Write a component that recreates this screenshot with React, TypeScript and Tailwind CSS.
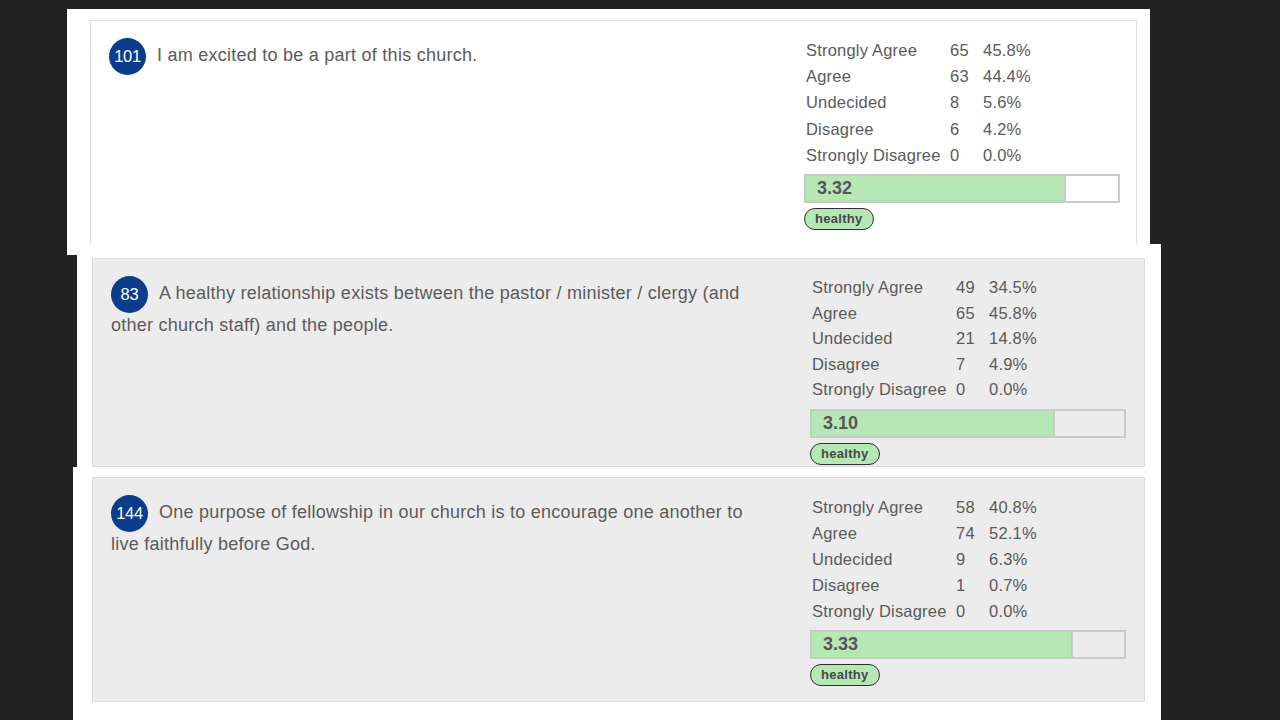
type Row = { label: string; count: string; pct: string };

type Item = {
  num: string;
  question: string;
  rows: Row[];
  score: string;
  fill: number;
  rowLeading: string;
};

const ITEMS: Item[] = [
  {
    num: "101",
    question: "I am excited to be a part of this church.",
    rows: [
      { label: "Strongly Agree", count: "65", pct: "45.8%" },
      { label: "Agree", count: "63", pct: "44.4%" },
      { label: "Undecided", count: "8", pct: "5.6%" },
      { label: "Disagree", count: "6", pct: "4.2%" },
      { label: "Strongly Disagree", count: "0", pct: "0.0%" },
    ],
    score: "3.32",
    fill: 82.6,
    rowLeading: "leading-[26.2px]",
  },
  {
    num: "83",
    question:
      "A healthy relationship exists between the pastor / minister / clergy (and other church staff) and the people.",
    rows: [
      { label: "Strongly Agree", count: "49", pct: "34.5%" },
      { label: "Agree", count: "65", pct: "45.8%" },
      { label: "Undecided", count: "21", pct: "14.8%" },
      { label: "Disagree", count: "7", pct: "4.9%" },
      { label: "Strongly Disagree", count: "0", pct: "0.0%" },
    ],
    score: "3.10",
    fill: 77.3,
    rowLeading: "leading-[25.5px]",
  },
  {
    num: "144",
    question:
      "One purpose of fellowship in our church is to encourage one another to live faithfully before God.",
    rows: [
      { label: "Strongly Agree", count: "58", pct: "40.8%" },
      { label: "Agree", count: "74", pct: "52.1%" },
      { label: "Undecided", count: "9", pct: "6.3%" },
      { label: "Disagree", count: "1", pct: "0.7%" },
      { label: "Strongly Disagree", count: "0", pct: "0.0%" },
    ],
    score: "3.33",
    fill: 83,
    rowLeading: "leading-[26px]",
  },
];

function QuestionCard({ item, leftCol }: { item: Item; leftCol: string }) {
  return (
    <div className="flex pl-[18px]">
      <div className={`${leftCol} shrink-0 pr-[50px] pt-[19px]`}>
        <p className="text-[18px] leading-[31.5px] tracking-[0.25px] text-[#5b5b5b]">
          <span className="-my-[4px] mr-[11px] inline-flex h-[37px] w-[37px] items-center justify-center rounded-full bg-[#0b3d8c] align-middle text-[16.5px] leading-none tracking-[-0.3px] text-white">
            {item.num}
          </span>
          {item.question}
        </p>
      </div>
      <div className="w-[316px] shrink-0 pt-[16px]">
        {item.rows.map((r) => (
          <div
            key={r.label}
            className={`${item.rowLeading} grid grid-cols-[144px_33px_1fr] pl-[2px] text-[16.5px] tracking-[0.2px] text-[#5a5a5a]`}
          >
            <span className="whitespace-nowrap">{r.label}</span>
            <span>{r.count}</span>
            <span>{r.pct}</span>
          </div>
        ))}
        <div className="mt-[6px] flex h-[29px] border-2 border-[#c9c9c9]">
          <div
            className="flex items-center bg-[#b6e8b6] pl-[11px] text-[18px] font-bold text-[#555]"
            style={{ width: `${item.fill}%` }}
          >
            {item.score}
          </div>
          <div className="border-l-2 border-[#c9c9c9]" />
        </div>
        <div className="mt-[5px] inline-flex h-[22px] items-center rounded-full border-[1.5px] border-[#2f2f2f] bg-[#b6e8b6] px-[10px] text-[13px] font-bold tracking-[0.3px] text-[#474747]">
          healthy
        </div>
      </div>
    </div>
  );
}

export default function App() {
  return (
    <div
      className="h-[720px] w-[1280px] overflow-hidden bg-[#222222]"
      style={{ fontFamily: '"Liberation Sans", Arial, sans-serif' }}
    >
      {/* first pasted card */}
      <div className="ml-[67px] mt-[9px] h-[246px] w-[1083px] overflow-hidden bg-white pl-[23px] pr-[13px] pt-[11px]">
        <div className="h-[260px] border border-[#dedede] bg-white">
          <QuestionCard item={ITEMS[0]} leftCol="w-[695px]" />
        </div>
      </div>

      {/* second pasted card */}
      <div className="relative z-10 ml-[77px] mt-[-11px] h-[223px] w-[1084px] bg-white pl-[15px] pr-[16px] pt-[14px]">
        <div className="h-[209px] border border-[#dcdcdc] bg-[#ececec]">
          <QuestionCard item={ITEMS[1]} leftCol="w-[699px]" />
        </div>
      </div>

      {/* third pasted card */}
      <div className="relative z-10 ml-[73px] h-[253px] w-[1088px] bg-white pl-[19px] pr-[16px] pt-[10px]">
        <div className="h-[225px] border border-[#dcdcdc] bg-[#ececec]">
          <QuestionCard item={ITEMS[2]} leftCol="w-[699px]" />
        </div>
      </div>
    </div>
  );
}
